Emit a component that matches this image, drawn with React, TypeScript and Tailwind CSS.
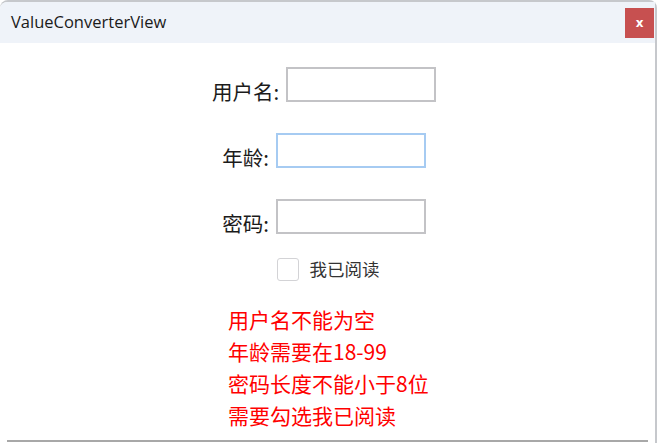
import { useState } from "react";

const cjk = "font-['Noto_Sans_CJK_SC','Noto_Sans',sans-serif]";

type FieldRowProps = {
  label: string;
  focused?: boolean;
  type?: string;
};

function FieldRow({ label, focused = false, type = "text" }: FieldRowProps) {
  return (
    <div className="flex items-end gap-[7px]">
      <span className={`${cjk} text-[20.5px] leading-[24px] text-[#1b1b1b] mb-[-1px]`}>
        {label}
      </span>
      <input
        type={type}
        className={`h-[35px] w-[150px] border-2 bg-white px-1 outline-none ${
          focused ? "border-[#a6cbf2]" : "border-[#c3c3c6]"
        }`}
      />
    </div>
  );
}

export default function App() {
  const [agreed, setAgreed] = useState(false);

  const errors = [
    "用户名不能为空",
    "年龄需要在18-99",
    "密码长度不能小于8位",
    "需要勾选我已阅读",
  ];

  return (
    <div className="h-[443px] w-[659px] overflow-hidden bg-white">
      <div className="flex h-full w-[657px] flex-col rounded-t-[8px] border-t-2 border-r-2 border-[#c6c8cc] bg-white">
        <header className="flex h-[41px] items-center justify-between rounded-tl-[7px] bg-[#eff3f9] pl-[11px] pr-[1px]">
          <span className="font-['Open_Sans','Noto_Sans',sans-serif] text-[16.5px] text-[#1a1a1a]">
            ValueConverterView
          </span>
          <button className="flex h-[30px] w-[29px] items-center justify-center bg-[#c75050] font-['DejaVu_Sans',sans-serif] text-[12px] font-bold text-white">
            x
          </button>
        </header>

        <main className="flex flex-1 flex-col items-center pt-[24px]">
          <div className="flex flex-col items-center gap-[31px] pr-[7px]">
            <FieldRow label="用户名:" />
            <FieldRow label="年龄:" focused />
            <FieldRow label="密码:" type="password" />
          </div>

          <label className="mt-[23px] flex cursor-pointer items-center gap-[11px] pl-[1px]">
            <span
              onClick={() => setAgreed(!agreed)}
              className="flex h-[23px] w-[22px] items-center justify-center rounded-[3px] border border-[#d3d3d6] bg-white text-[14px] text-[#333]"
            >
              {agreed ? "✓" : ""}
            </span>
            <span className={`${cjk} text-[17.5px] leading-[24px] text-[#333333]`}>我已阅读</span>
          </label>

          <div className={`${cjk} mt-[22px] self-start pl-[228px] text-[21px] leading-[32px] text-[#ff0000]`}>
            {errors.map((e) => (
              <div key={e}>{e}</div>
            ))}
          </div>
        </main>

        <div className="mx-[7px] mb-[1px] h-[2px] bg-[#a8a8a8]" />
      </div>
    </div>
  );
}
